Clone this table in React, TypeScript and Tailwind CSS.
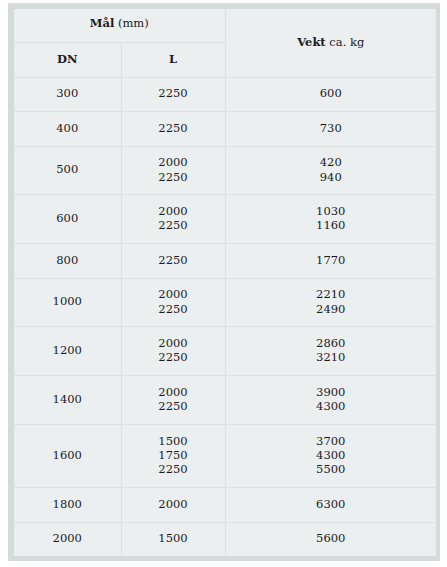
import React from 'react';

type Row = { dn: string; l: string[]; kg: string[] };

const rows: Row[] = [
  { dn: '300', l: ['2250'], kg: ['600'] },
  { dn: '400', l: ['2250'], kg: ['730'] },
  { dn: '500', l: ['2000', '2250'], kg: ['420', '940'] },
  { dn: '600', l: ['2000', '2250'], kg: ['1030', '1160'] },
  { dn: '800', l: ['2250'], kg: ['1770'] },
  { dn: '1000', l: ['2000', '2250'], kg: ['2210', '2490'] },
  { dn: '1200', l: ['2000', '2250'], kg: ['2860', '3210'] },
  { dn: '1400', l: ['2000', '2250'], kg: ['3900', '4300'] },
  { dn: '1600', l: ['1500', '1750', '2250'], kg: ['3700', '4300', '5500'] },
  { dn: '1800', l: ['2000'], kg: ['6300'] },
  { dn: '2000', l: ['1500'], kg: ['5600'] },
];

const cell = 'border border-[#dde1e2] px-2 pt-[8.5px] pb-[10.5px] text-center align-middle';

export default function App() {
  return (
    <div className="min-h-[567px] bg-white pt-[3px] pl-2">
      <div
        className="w-[432px] bg-[#d5dbdb] pt-[6px] pl-[6px] pr-[4px] pb-[5px] text-[11.5px] leading-[14.4px] text-[#1a1a24]"
        style={{ fontFamily: '"DejaVu Serif", "Liberation Serif", serif' }}
      >
        <table className="w-[422px] table-fixed border-collapse bg-[#eceff0]">
          <colgroup>
            <col className="w-[107px]" />
            <col className="w-[104px]" />
            <col />
          </colgroup>
          <thead>
            <tr>
              <th
                colSpan={2}
                className="border border-t-0 border-l-0 border-[#dde1e2] px-2 pt-[6.5px] pb-[12.5px] text-center align-middle font-normal"
              >
                <b>Mål</b> (mm)
              </th>
              <th rowSpan={2} className={`${cell} border-t-0 border-r-0 font-normal`}>
                <b>Vekt</b> ca. kg
              </th>
            </tr>
            <tr>
              <th className={`${cell} border-l-0 font-bold`}>DN</th>
              <th className={`${cell} font-bold`}>L</th>
            </tr>
          </thead>
          <tbody>
            {rows.map((r, i) => {
              const last = i === rows.length - 1 ? 'border-b-0' : '';
              return (
                <tr key={r.dn}>
                  <td className={`${cell} border-l-0 ${last}`}>{r.dn}</td>
                  <td className={`${cell} ${last}`}>
                    {r.l.map((v, j) => (
                      <div key={j}>{v}</div>
                    ))}
                  </td>
                  <td className={`${cell} border-r-0 ${last}`}>
                    {r.kg.map((v, j) => (
                      <div key={j}>{v}</div>
                    ))}
                  </td>
                </tr>
              );
            })}
          </tbody>
        </table>
      </div>
    </div>
  );
}
